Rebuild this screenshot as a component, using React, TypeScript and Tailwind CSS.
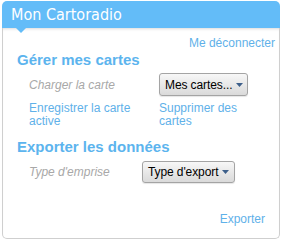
function Select({ label, width }: { label: string; width: string }) {
  return (
    <button
      className={`flex ${width} items-center gap-[4px] whitespace-nowrap rounded-[3px] border border-[#a4a4a4] bg-gradient-to-b from-[#f7f7f7] to-[#dadada] pl-[5px] text-[12px] leading-[14px] text-black shadow-[0_1px_1px_rgba(0,0,0,0.1)]`}
    >
      <span className="tracking-[-0.1px]">{label}</span>
      <svg width="7" height="4" viewBox="0 0 7 4">
        <path d="M0 0h7L3.5 4z" fill="#3d5f8a" />
      </svg>
    </button>
  );
}

export default function App() {
  return (
    <div className="h-[242px] w-[282px] bg-white px-[2px] pt-[1px] font-['Liberation_Sans',Arial,sans-serif]">
      <div className="relative flex h-[27px] items-center rounded-t-[5px] bg-[#63bcf8] pl-[9px]">
        <span className="font-['Liberation_Sans_Narrow','DejaVu_Sans_Condensed',sans-serif] text-[16px] text-white">
          Mon Cartoradio
        </span>
        <div className="absolute left-[14px] top-[27px] h-0 w-0 border-x-[5px] border-t-[5px] border-x-transparent border-t-[#63bcf8]" />
      </div>
      <div className="flex h-[211px] flex-col rounded-b-[5px] border border-t-0 border-[#cfcfcf] px-[14px] pb-[12px] shadow-[inset_0_3px_3px_-2px_rgba(0,0,0,0.15)]">
        <div className="-mr-[10px] mt-[8px] text-right text-[12px] leading-[14px] text-[#5fb1e9]">Me déconnecter</div>
        <div className="mt-[1px] text-[15px] font-bold leading-[18px] text-[#5cb4ee]">Gérer mes cartes</div>
        <div className="mt-[4px] flex h-[23px] pl-[12px]">
          <span className="flex w-[130px] items-center text-[12px] italic text-[#a8a8a8]">Charger la carte</span>
          <Select label="Mes cartes..." width="w-[89px]" />
        </div>
        <div className="mt-[6px] flex pl-[12px] text-[12px] leading-[13px] text-[#5fb1e9]">
          <span className="w-[130px]">Enregistrer la carte active</span>
          <span className="w-[88px]">Supprimer des cartes</span>
        </div>
        <div className="mt-[10px] text-[15px] font-bold leading-[18px] text-[#5cb4ee]">Exporter les données</div>
        <div className="mt-[5px] flex h-[22px] pl-[12px]">
          <span className="flex w-[113px] items-center text-[12px] italic text-[#a8a8a8]">Type d'emprise</span>
          <Select label="Type d'export" width="w-[93px]" />
        </div>
        <div className="mt-auto text-right text-[12px] leading-[14px] text-[#5fb1e9]">Exporter</div>
      </div>
    </div>
  );
}
